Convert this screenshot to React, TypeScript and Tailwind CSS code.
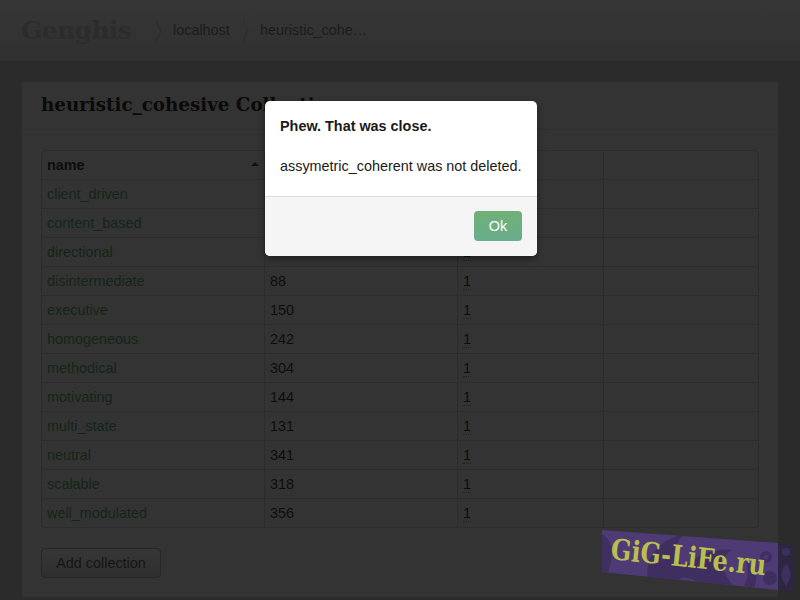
import React from "react";

interface Row {
  name: string;
  docs?: number;
}

const rows: Row[] = [
  { name: "client_driven" },
  { name: "content_based" },
  { name: "directional" },
  { name: "disintermediate", docs: 88 },
  { name: "executive", docs: 150 },
  { name: "homogeneous", docs: 242 },
  { name: "methodical", docs: 304 },
  { name: "motivating", docs: 144 },
  { name: "multi_state", docs: 131 },
  { name: "neutral", docs: 341 },
  { name: "scalable", docs: 318 },
  { name: "well_modulated", docs: 356 },
];

const Chevron: React.FC = () => (
  <svg width="7" height="22" viewBox="0 0 7 22" fill="none" className="shrink-0">
    <path d="M1 1 L6 11 L1 21" stroke="#2a2a2a" strokeWidth="1" />
  </svg>
);

const Watermark: React.FC = () => (
  <svg width="200" height="72" viewBox="0 0 200 72" className="absolute left-[600px] top-[528px]">
    <defs>
      <clipPath id="band">
        <polygon points="2,2 178,15 178,62 2,44" />
      </clipPath>
    </defs>
    <polygon points="178,16 193,17 193,64 178,62" fill="#2c2640" />
    <g fill="#3d2f5f">
      <circle cx="186" cy="24" r="4" />
      <path d="M186 36 C192 42 192 50 186 58 C180 50 180 42 186 36 Z" />
    </g>
    <polygon points="2,2 178,15 178,62 2,44" fill="#4e3b75" />
    <g fill="#3f2f60" clipPath="url(#band)">
      <path d="M48 50 C44 28 60 12 84 6 C72 18 74 30 84 40 C96 26 116 20 132 22 C118 30 120 44 140 66 L104 60 C94 50 84 46 74 54 Z" />
      <path d="M2 6 C12 12 15 24 8 44 L2 44 Z" />
      <path d="M146 34 C156 38 160 50 152 64 L142 62 C148 52 150 44 146 34 Z" />
      <circle cx="166" cy="29" r="6" />
      <circle cx="170" cy="50" r="7" />
    </g>
    <circle cx="166" cy="29" r="2" fill="#4e3b75" />
    <text
      x="10"
      y="31"
      transform="rotate(6 10 31)"
      fill="#bcbd50"
      fontFamily="'DejaVu Serif', serif"
      fontWeight="700"
      fontSize="29"
      textLength="156"
      lengthAdjust="spacingAndGlyphs"
    >
      GiG-LiFe.ru
    </text>
  </svg>
);

export default function App() {
  return (
    <div className="relative w-[800px] h-[600px] overflow-hidden bg-[#2b2b2b] font-['Liberation_Sans',sans-serif] text-[14.4px] text-[#0d0d0d]">
      <header className="flex items-center h-[61px] pl-[21px] bg-gradient-to-b from-[#363636] to-[#303030]">
        <span className="w-[134px] font-['DejaVu_Serif',serif] font-bold text-[25px] text-[#2c2c2c] tracking-tight">Genghis</span>
        <div className="flex items-center gap-[11px] text-[#1c1c1c]">
          <Chevron />
          <span className="w-[58px]">localhost</span>
          <Chevron />
          <span>heuristic_cohe…</span>
        </div>
      </header>

      <div className="mt-[20px] mx-[21px] h-[517px] rounded-[4px] border border-[#2c2c2c] bg-[#333333]">
        <div className="flex items-center h-[48px] pl-[19px] pb-[1px] border-b border-[#2e2e2e]">
          <h1 className="font-['DejaVu_Serif',serif] font-bold text-[18.3px] text-[#0a0a0a]">heuristic_cohesive Collection</h1>
        </div>
        <div className="px-[19px] pt-[20px]">
          <table className="w-[718px] table-fixed border-separate border-spacing-0 rounded-[4px] border border-[#2c2c2c]">
            <colgroup>
              <col className="w-[223px]" />
              <col className="w-[193px]" />
              <col className="w-[146px]" />
              <col />
            </colgroup>
            <thead>
              <tr className="h-[28px]">
                <th className="relative px-[5px] pt-[2px] text-left font-bold border-r border-[#2c2c2c]">
                  name
                  <span className="absolute right-[5px] top-[11px] w-0 h-0 border-x-[4px] border-x-transparent border-b-[4px] border-b-[#111111]" />
                </th>
                <th className="border-r border-[#2c2c2c]" />
                <th className="border-r border-[#2c2c2c]" />
                <th />
              </tr>
            </thead>
            <tbody>
              {rows.map((row) => (
                <tr key={row.name} className="h-[29px]">
                  <td className="px-[5px] pt-[2px] border-t border-r border-[#2c2c2c] text-[#132517]">{row.name}</td>
                  <td className="px-[5px] pt-[2px] border-t border-r border-[#2c2c2c]">{row.docs}</td>
                  <td className="px-[5px] pt-[2px] border-t border-r border-[#2c2c2c]">
                    <span className="border-b border-dotted border-[#222222]">1</span>
                  </td>
                  <td className="border-t border-[#2c2c2c]" />
                </tr>
              ))}
            </tbody>
          </table>
          <button className="mt-[20px] h-[30px] w-[120px] pt-[1px] rounded-[4px] border border-[#272727] bg-gradient-to-b from-[#363636] to-[#2f2f2f] text-[#151515]">
            Add collection
          </button>
        </div>
      </div>

      <div className="absolute left-[265px] top-[101px] w-[272px] h-[155px] flex flex-col rounded-[5px] bg-white shadow-[0_3px_7px_rgba(0,0,0,0.4)] overflow-hidden">
        <div className="flex-1 px-[15px] pt-[15px] text-[#1a1a1a]">
          <p className="font-bold leading-[20px]">Phew. That was close.</p>
          <p className="mt-[20px] leading-[20px]">assymetric_coherent was not deleted.</p>
        </div>
        <div className="flex justify-end h-[60px] pt-[14px] pr-[15px] border-t border-[#dddddd] bg-[#f5f5f5]">
          <button className="w-[48px] h-[30px] pt-[1px] rounded-[4px] bg-gradient-to-b from-[#70b077] to-[#69ad8c] text-white">Ok</button>
        </div>
      </div>

      <Watermark />
    </div>
  );
}
